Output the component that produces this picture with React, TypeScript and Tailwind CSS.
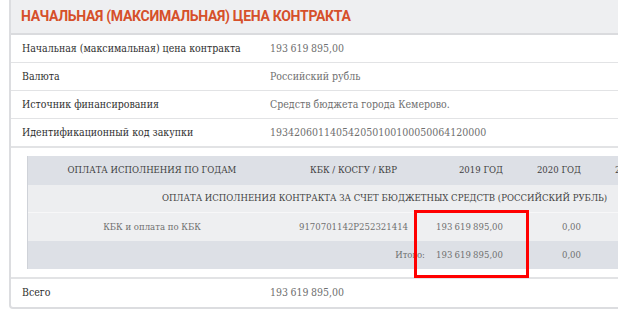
import React from "react";

const slab = { fontFamily: '"DejaVu Serif Condensed", "DejaVu Serif", serif' };

const infoRows: [string, string, boolean][] = [
  ["Начальная (максимальная) цена контракта", "193 619 895,00", true],
  ["Валюта", "Российский рубль", false],
  ["Источник финансирования", "Средств бюджета города Кемерово.", false],
  ["Идентификационный код закупки", "193420601140542050100100050064120000", true],
];

function InfoRow({
  label,
  value,
  numeric,
  last,
}: {
  label: string;
  value: string;
  numeric?: boolean;
  last?: boolean;
}) {
  return (
    <div
      className={`flex items-center h-[28px] px-[11px] whitespace-nowrap ${last ? "" : "border-b border-[#e2e3e5]"}`}
    >
      <div className="w-[248px] shrink-0 text-[10.5px] text-[#2f2f2f]">{label}</div>
      <div
        className={`text-[10.5px] text-[#6f6f6f] font-light ${numeric ? "[word-spacing:-0.5px]" : ""}`}
      >
        {value}
      </div>
    </div>
  );
}

function Num({ children }: { children: React.ReactNode }) {
  return <span className="[word-spacing:-0.5px]">{children}</span>;
}

export default function App() {
  return (
    <div className="relative w-[618px] h-[312px] overflow-hidden bg-white" style={slab}>
      <div className="ml-[9px] w-[660px] border-2 border-t-0 border-[#dcdde0] rounded-bl-[4px] bg-white">
        <div className="h-[35px] flex items-center px-[10px] bg-[#eeeff1] border-b-2 border-[#dadbde]">
          <span
            className="text-[14px] font-bold text-[#d6502a] tracking-[-0.3px] whitespace-nowrap"
            style={{ fontFamily: 'Roboto, "Liberation Sans", sans-serif' }}
          >
            НАЧАЛЬНАЯ (МАКСИМАЛЬНАЯ) ЦЕНА КОНТРАКТА
          </span>
        </div>

        {infoRows.map(([l, v, n]) => (
          <InfoRow key={l} label={l} value={v} numeric={n} />
        ))}

        <div className="border-t border-[#e2e3e5] pt-[8px] pb-[8px] pl-[16px]">
          <div className="w-[714px] border-l border-[#cfd2d8] text-[9.5px] whitespace-nowrap">
            <div className="flex h-[29px] items-center bg-[#dde0e6] text-[#3f3f3f] uppercase">
              <div className="w-[248px] text-center">ОПЛАТА ИСПОЛНЕНИЯ ПО ГОДАМ</div>
              <div className="w-[155px] text-center">КБК / КОСГУ / КВР</div>
              <div className="w-[80px] text-right pr-[8px]">2019 ГОД</div>
              <div className="w-[78px] text-right pr-[8px]">2020 ГОД</div>
              <div className="w-[78px] text-right pr-[8px]">2021 ГОД</div>
            </div>
            <div className="flex h-[28px] items-center justify-center bg-[#edeef0] text-[#444] border-b border-[#f7f7f8]">
              ОПЛАТА ИСПОЛНЕНИЯ КОНТРАКТА ЗА СЧЕТ БЮДЖЕТНЫХ СРЕДСТВ (РОССИЙСКИЙ РУБЛЬ)
            </div>
            <div className="flex h-[28px] items-center bg-[#eeeff1] text-[#707070] font-light">
              <div className="w-[248px] text-center">КБК и оплата по КБК</div>
              <div className="w-[155px] text-center">9170701142P252321414</div>
              <div className="w-[80px] text-right pr-[8px]">
                <Num>193 619 895,00</Num>
              </div>
              <div className="w-[78px] text-right pr-[8px]">0,00</div>
              <div className="w-[78px] text-right pr-[8px]">0,00</div>
            </div>
            <div className="flex h-[28px] items-center bg-[#dde0e6] text-[#707070] font-light">
              <div className="w-[248px]" />
              <div className="w-[155px] text-right pr-[6px]">Итого:</div>
              <div className="w-[80px] text-right pr-[8px]">
                <Num>193 619 895,00</Num>
              </div>
              <div className="w-[78px] text-right pr-[8px]">0,00</div>
              <div className="w-[78px] text-right pr-[8px]">0,00</div>
            </div>
          </div>
        </div>

        <div className="border-t-2 border-[#e2e3e5]">
          <InfoRow label="Всего" value="193 619 895,00" numeric last />
        </div>
      </div>

      {/* highlight frame drawn over the 2019 column */}
      <div className="absolute left-[414px] top-[210px] w-[115px] h-[68px] border-[3px] border-[#ff0000] pointer-events-none" />
    </div>
  );
}
